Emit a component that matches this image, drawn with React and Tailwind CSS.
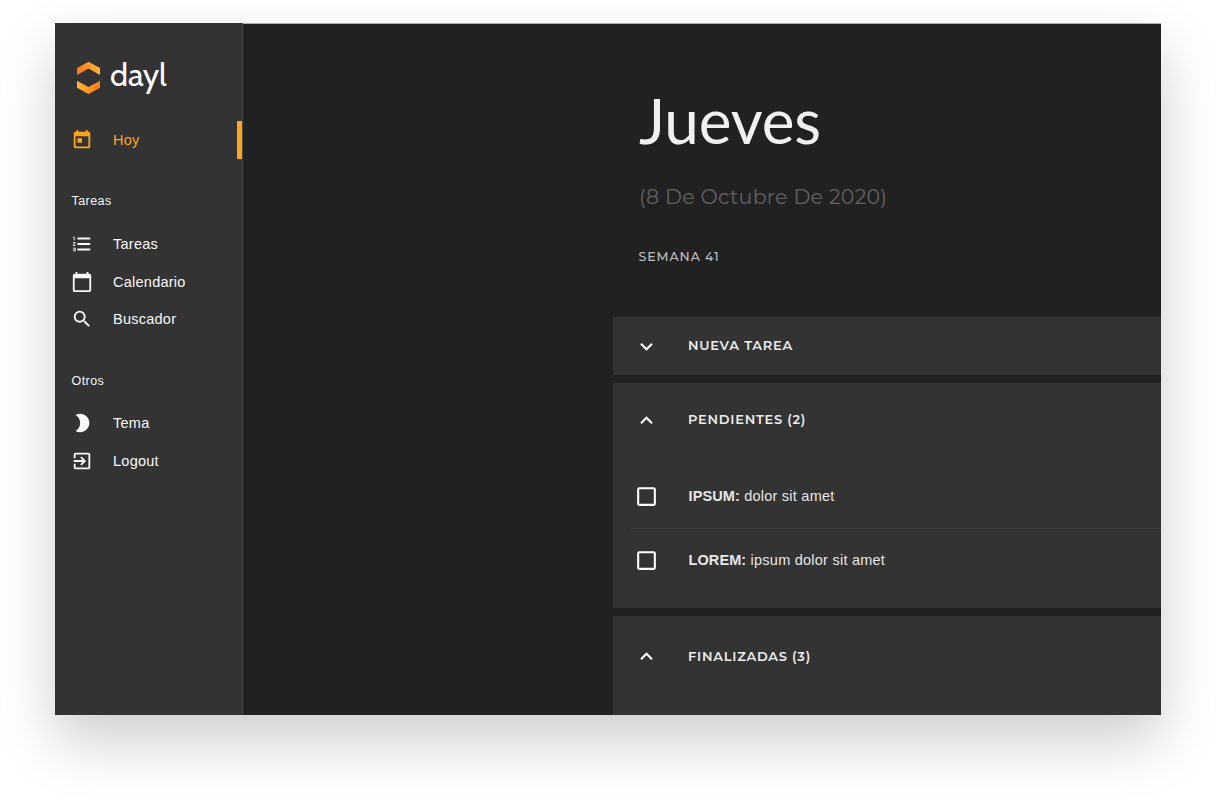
import React from "react";
import {
  MdToday,
  MdFormatListNumbered,
  MdCalendarToday,
  MdSearch,
  MdBrightness2,
  MdExitToApp,
  MdExpandMore,
  MdExpandLess,
  MdCheckBoxOutlineBlank,
} from "react-icons/md";

function Logo() {
  return (
    <div className="flex h-[40px] items-center pl-[21px]">
      <svg width="25" height="34" viewBox="0 0 25 34" className="mt-[5px]">
        <defs>
          <linearGradient id="top" x1="0" x2="1" y1="0" y2="0">
            <stop offset="0" stopColor="#ff7a14" />
            <stop offset="1" stopColor="#ffb53a" />
          </linearGradient>
          <linearGradient id="bottom" x1="0" x2="1" y1="0" y2="0">
            <stop offset="0" stopColor="#ffb53a" />
            <stop offset="1" stopColor="#ff7a14" />
          </linearGradient>
        </defs>
        <path d="M1 7.1 12.5 0.8 24 7.1V14.1L12.5 7.6 1 14.1Z" fill="url(#top)" />
        <path d="M1 19.8 12.5 26 24 19.8V26.8L12.5 33.1 1 26.8Z" fill="url(#bottom)" />
      </svg>
      <span className="ml-[9px] font-['Cabin','Lato',sans-serif] text-[32.5px] leading-[40px] tracking-[-0.1px] text-white">dayl</span>
    </div>
  );
}

function NavItem({ icon: Icon, label, active }) {
  return (
    <div className={`flex h-[37.5px] items-center pl-[16px] ${active ? "border-r-5 border-[#ffa321] text-[#ffa321]" : "text-[#f8f8f8]"}`}>
      <Icon size={22} />
      <span className="ml-[20px] text-[14.5px] leading-5 tracking-[0.25px]">{label}</span>
    </div>
  );
}

function NavTitle({ children }) {
  return <h2 className="pl-[16.5px] text-[12.5px] leading-5 tracking-[0.45px] text-[#f4f4f4]">{children}</h2>;
}

function PanelHeader({ open, children, className }) {
  const Icon = open ? MdExpandLess : MdExpandMore;
  return (
    <div className={`flex items-center pl-[21px] ${className}`}>
      <Icon size={25} className="text-white" />
      <span className="ml-[29px] font-['Montserrat','Inter',sans-serif] text-[13px] font-semibold tracking-[0.75px] text-[#ececec]">
        {children}
      </span>
    </div>
  );
}

function Task({ tag, text, className }) {
  return (
    <div className={`ml-[18px] flex items-center pl-[3px] ${className}`}>
      <MdCheckBoxOutlineBlank size={25} className="text-white" />
      <span className="ml-[29.5px] text-[14.5px] leading-[23px] tracking-[0.24px] text-[#e6e6e6]">
        <b className="tracking-[0.1px]">{tag}</b> {text}
      </span>
    </div>
  );
}

export default function App() {
  return (
    <div className="h-[802px] w-[1216px] overflow-hidden bg-white pt-[23px] pl-[55px] font-['Liberation_Sans',Arial,sans-serif]">
      <div className="flex h-[692px] w-[1106px] bg-[#212121] shadow-[0_26px_56px_rgba(0,0,0,0.2)]">
        <aside className="w-[188px] shrink-0 border-r border-[#484848] bg-[#333333] pt-[32px]">
          <Logo />
          <nav className="pt-[26px]">
            <NavItem icon={MdToday} label="Hoy" active />
            <div className="pt-[32px] pb-[15px]">
              <NavTitle>Tareas</NavTitle>
            </div>
            <NavItem icon={MdFormatListNumbered} label="Tareas" />
            <NavItem icon={MdCalendarToday} label="Calendario" />
            <NavItem icon={MdSearch} label="Buscador" />
            <div className="pt-[32.5px] pb-[14px]">
              <NavTitle>Otros</NavTitle>
            </div>
            <NavItem icon={MdBrightness2} label="Tema" />
            <NavItem icon={MdExitToApp} label="Logout" />
          </nav>
        </aside>

        <main className="min-w-0 flex-1 overflow-hidden border-t border-[#f5a52f] pl-[370px] whitespace-nowrap">
          <header className="flex h-[293px] flex-col pt-[56px] pl-[26px]">
            <h1 className="font-['Lato',sans-serif] text-[62px] leading-[80px] tracking-[-0.1px] text-[#f0f0f0]">Jueves</h1>
            <p className="mt-[22px] font-['Montserrat','Inter',sans-serif] text-[20.5px] leading-[30px] tracking-[0.28px] text-[#616161]">
              (8 De Octubre De 2020)
            </p>
            <p className="mt-[35px] -ml-[0.5px] font-['Montserrat','Inter',sans-serif] text-[12.5px] leading-5 font-medium tracking-[0.95px] text-[#c0c0c0]">
              SEMANA 41
            </p>
          </header>
          <div className="flex flex-col gap-[8px]">
            <section className="h-[58px] bg-[#333333]">
              <PanelHeader className="h-[58px]">NUEVA TAREA</PanelHeader>
            </section>
            <section className="h-[225px] bg-[#333333]">
              <PanelHeader open className="h-[74px]">PENDIENTES (2)</PanelHeader>
              <div className="pt-[8px]">
                <Task tag="IPSUM:" text="dolor sit amet" className="h-[64px] border-b border-[#3c3c3c]" />
                <Task tag="LOREM:" text="ipsum dolor sit amet" className="h-[62px]" />
              </div>
            </section>
            <section className="h-[100px] bg-[#333333]">
              <PanelHeader open className="h-[81px]">FINALIZADAS (3)</PanelHeader>
            </section>
          </div>
        </main>
      </div>
    </div>
  );
}
